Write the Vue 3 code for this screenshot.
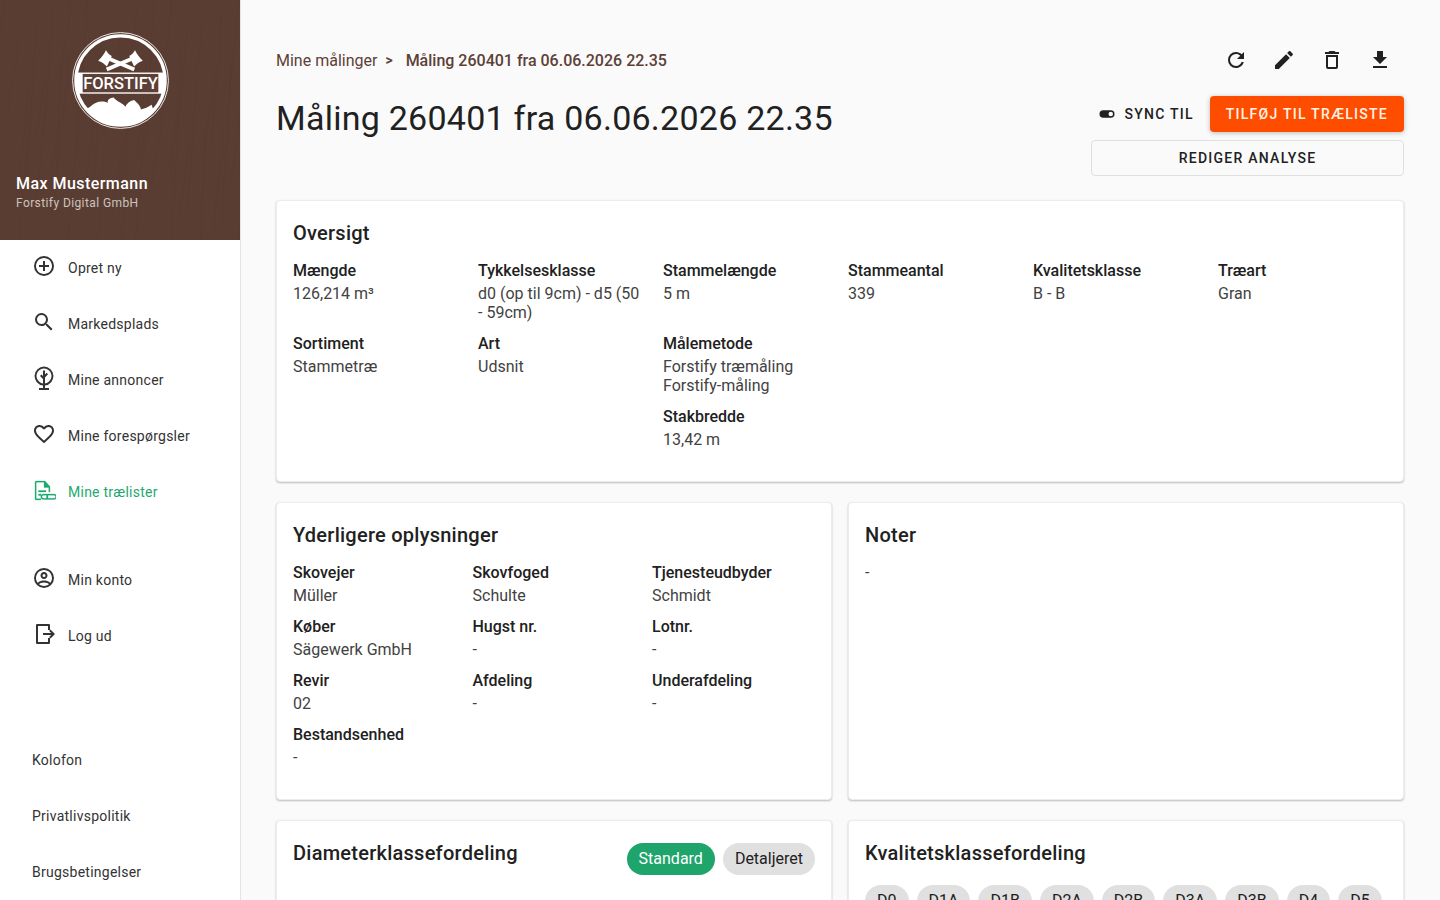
<script setup>
const icons = {
  plus: 'M12,20C7.59,20 4,16.41 4,12C4,7.59 7.59,4 12,4C16.41,4 20,7.59 20,12C20,16.41 16.41,20 12,20M12,2A10,10 0 0,0 2,12A10,10 0 0,0 12,22A10,10 0 0,0 22,12A10,10 0 0,0 12,2M13,7H11V11H7V13H11V17H13V13H17V11H13V7Z',
  search: 'M9.5,3A6.5,6.5 0 0,1 16,9.5C16,11.11 15.41,12.59 14.44,13.73L14.71,14H15.5L20.5,19L19,20.5L14,15.5V14.71L13.73,14.44C12.59,15.41 11.11,16 9.5,16A6.5,6.5 0 0,1 3,9.5A6.5,6.5 0 0,1 9.5,3M9.5,5C7,5 5,7 5,9.5C5,12 7,14 9.5,14C12,14 14,12 14,9.5C14,7 12,5 9.5,5Z',
  heart: 'M12.1,18.55L12,18.65L11.89,18.55C7.14,14.24 4,11.39 4,8.5C4,6.5 5.5,5 7.5,5C9.04,5 10.54,6 11.07,7.36H12.93C13.46,6 14.96,5 16.5,5C18.5,5 20,6.5 20,8.5C20,11.39 16.86,14.24 12.1,18.55M16.5,3C14.76,3 13.09,3.81 12,5.08C10.91,3.81 9.24,3 7.5,3C4.42,3 2,5.41 2,8.5C2,12.27 5.4,15.36 10.55,20.03L12,21.35L13.45,20.03C18.6,15.36 22,12.27 22,8.5C22,5.41 19.58,3 16.5,3Z',
  account: 'M12,2A10,10 0 0,0 2,12A10,10 0 0,0 12,22A10,10 0 0,0 22,12A10,10 0 0,0 12,2M7.07,18.28C7.5,17.38 10.12,16.5 12,16.5C13.88,16.5 16.5,17.38 16.93,18.28C15.57,19.36 13.86,20 12,20C10.14,20 8.43,19.36 7.07,18.28M18.36,16.83C16.93,15.09 13.46,14.5 12,14.5C10.54,14.5 7.07,15.09 5.64,16.83C4.62,15.5 4,13.82 4,12C4,7.59 7.59,4 12,4C16.41,4 20,7.59 20,12C20,13.82 19.38,15.5 18.36,16.83M12,6C10.06,6 8.5,7.56 8.5,9.5C8.5,11.44 10.06,13 12,13C13.94,13 15.5,11.44 15.5,9.5C15.5,7.56 13.94,6 12,6M12,11A1.5,1.5 0 0,1 10.5,9.5A1.5,1.5 0 0,1 12,8A1.5,1.5 0 0,1 13.5,9.5A1.5,1.5 0 0,1 12,11Z',
  logout: 'M5,2H17A1,1 0 0,1 18,3V8H16V4H6V20H16V16H18V21A1,1 0 0,1 17,22H5A1,1 0 0,1 4,21V3A1,1 0 0,1 5,2M18.5,7.5L23,12L18.5,16.5L17.1,15.1L19.2,13H11V11H19.2L17.1,8.9Z',
  tree: 'M12,0.5A9.5,9.5 0 0,0 11,19.44V22H7V24H17V22H13V19.44A9.5,9.5 0 0,0 12,0.5M13,17.4V11.5L16,8.2L14.6,6.8L13,8.5V4.5H11V10L9.4,8.6L8,10L11,13V17.4A7.5,7.5 0 1,1 13,17.4Z',
  list: 'M4,3H13L18,8.5V14H16.8V9.5H12V4.2H4.2V20.8H9V22H4A1,1 0 0,1 3,21V4A1,1 0 0,1 4,3M6.5,12.5H14V14H6.5V12.5M6.5,16H9V17.5H6.5V16M11.5,16H22A2.5,2.5 0 0,1 22,21.5H11.5A2.5,2.5 0 0,1 11.5,16M11.5,17.2A1.5,1.5 0 0,0 11.5,20.3H14.5V17.2H11.5M16,17.2V20.3H22A1.5,1.5 0 0,0 22,17.2H16Z',
  refresh: 'M17.65,6.35C16.2,4.9 14.21,4 12,4A8,8 0 0,0 4,12A8,8 0 0,0 12,20C15.73,20 18.84,17.45 19.73,14H17.65C16.83,16.33 14.61,18 12,18A6,6 0 0,1 6,12A6,6 0 0,1 12,6C13.66,6 15.14,6.69 16.22,7.78L13,11H20V4L17.65,6.35Z',
  pencil: 'M20.71,7.04C21.1,6.65 21.1,6 20.71,5.63L18.37,3.29C18,2.9 17.35,2.9 16.96,3.29L15.12,5.12L18.87,8.87M3,17.25V21H6.75L17.81,9.93L14.06,6.18L3,17.25Z',
  trash: 'M6,19A2,2 0 0,0 8,21H16A2,2 0 0,0 18,19V7H6V19M8,9H16V19H8V9M15.5,4L14.5,3H9.5L8.5,4H5V6H19V4H15.5Z',
  download: 'M5,20H19V18H5M19,9H15V3H9V9H5L12,16L19,9Z',
  toggle: 'M17,7H7A5,5 0 0,0 2,12A5,5 0 0,0 7,17H17A5,5 0 0,0 22,12A5,5 0 0,0 17,7M17,15A3,3 0 0,1 14,12A3,3 0 0,1 17,9A3,3 0 0,1 20,12A3,3 0 0,1 17,15Z',
}
const nav = [
  { label: 'Opret ny', icon: 'plus' },
  { label: 'Markedsplads', icon: 'search' },
  { label: 'Mine annoncer', icon: 'tree' },
  { label: 'Mine forespørgsler', icon: 'heart' },
  { label: 'Mine trælister', icon: 'list', active: true },
]
const nav2 = [
  { label: 'Min konto', icon: 'account' },
  { label: 'Log ud', icon: 'logout' },
]
const footer = ['Kolofon', 'Privatlivspolitik', 'Brugsbetingelser']
const actions = ['refresh', 'pencil', 'trash', 'download']
const overview = [
  [{ l: 'Mængde', v: ['126,214 m³'] }],
  [{ l: 'Tykkelsesklasse', v: ['d0 (op til 9cm) - d5 (50 - 59cm)'] }],
  [{ l: 'Stammelængde', v: ['5 m'] }],
  [{ l: 'Stammeantal', v: ['339'] }],
  [{ l: 'Kvalitetsklasse', v: ['B - B'] }],
  [{ l: 'Træart', v: ['Gran'] }],
  [{ l: 'Sortiment', v: ['Stammetræ'] }],
  [{ l: 'Art', v: ['Udsnit'] }],
  [{ l: 'Målemetode', v: ['Forstify træmåling', 'Forstify-måling'] }, { l: 'Stakbredde', v: ['13,42 m'] }],
]
const extra = [
  { l: 'Skovejer', v: 'Müller' }, { l: 'Skovfoged', v: 'Schulte' }, { l: 'Tjenesteudbyder', v: 'Schmidt' },
  { l: 'Køber', v: 'Sägewerk GmbH' }, { l: 'Hugst nr.', v: '-' }, { l: 'Lotnr.', v: '-' },
  { l: 'Revir', v: '02' }, { l: 'Afdeling', v: '-' }, { l: 'Underafdeling', v: '-' },
  { l: 'Bestandsenhed', v: '-' },
]
const chips = ['D0', 'D1A', 'D1B', 'D2A', 'D2B', 'D3A', 'D3B', 'D4', 'D5']
const grain = Array.from({ length: 46 }, (_, i) => {
  const x = 4 + i * 5.4 + ((i * 37) % 11) - 5
  const y = ((i * 53) % 170) - 20
  const len = 50 + ((i * 29) % 130)
  const bend = ((i * 17) % 9) - 4
  return `M${x + 10} ${y}C${x + 8 + bend} ${y + len / 3} ${x + 4 - bend} ${y + (2 * len) / 3} ${x} ${y + len}`
})
</script>

<template>
  <div class="app">
    <aside class="sidebar">
      <header class="brand">
        <svg class="grain" viewBox="0 0 240 240" aria-hidden="true">
          <path v-for="(d, i) in grain" :key="i" :d="d" />
        </svg>
        <svg class="logo" viewBox="0 0 100 100" aria-hidden="true">
          <defs>
            <clipPath id="inner"><circle cx="50" cy="50" r="46" /></clipPath>
          </defs>
          <circle cx="50" cy="50" r="49.4" fill="none" stroke="#fff" stroke-width="0.9" />
          <circle cx="50" cy="50" r="46" fill="none" stroke="#fff" stroke-width="3.4" />
          <g clip-path="url(#inner)" fill="#fff">
            <rect x="0" y="41.8" width="100" height="21.8" />
            <path d="M20 76C24 72 31 70 37 73C36 70.5 38 68 43 67.5C45 71 52 73 55 77C56 74 59 71 64 70C67 73 71 76 71 80C74 79 78 78 82 75L92 102H8V80C13 80 17 79 20 76Z" />
          </g>
          <g fill="#fff">
            <path d="M36 24.5L65 36.8L63.4 40.4L34.4 28.1Z" />
            <path d="M64 24.5L35 36.8L36.6 40.4L65.6 28.1Z" />
            <path d="M27 29.6C30 27 33 23 35 18.8C36.5 21.5 38.6 23.6 41 24.8L36 35.5C33.5 32.8 30.5 30.8 27 29.6Z" />
            <path d="M73 29.6C70 27 67 23 65 18.8C63.5 21.5 61.4 23.6 59 24.8L64 35.5C66.5 32.8 69.5 30.8 73 29.6Z" />
          </g>
          <rect x="11" y="43.2" width="78" height="19" fill="#5d4037" />
          <text x="50" y="59.2" text-anchor="middle" class="logo-text">FORSTIFY</text>
        </svg>
        <div class="user">
          <div class="user-name">Max Mustermann</div>
          <div class="user-org">Forstify Digital GmbH</div>
        </div>
      </header>

      <nav class="nav">
        <a v-for="n in nav" :key="n.label" class="nav-item" :class="{ active: n.active }">
          <svg class="icon nav-icon" viewBox="0 0 24 24"><path :d="icons[n.icon]" /></svg>
          <span>{{ n.label }}</span>
        </a>
      </nav>
      <nav class="nav nav-second">
        <a v-for="n in nav2" :key="n.label" class="nav-item">
          <svg class="icon nav-icon" viewBox="0 0 24 24"><path :d="icons[n.icon]" /></svg>
          <span>{{ n.label }}</span>
        </a>
      </nav>
      <nav class="nav nav-footer">
        <a v-for="f in footer" :key="f" class="nav-item"><span>{{ f }}</span></a>
      </nav>
    </aside>

    <main class="main">
      <div class="crumb-row">
        <div class="crumbs">
          <span>Mine målinger</span>
          <span class="crumb-sep">&gt;</span>
          <span class="crumb-current">Måling 260401 fra 06.06.2026 22.35</span>
        </div>
        <div class="actions">
          <button v-for="a in actions" :key="a" class="icon-btn">
            <svg class="icon" viewBox="0 0 24 24"><path :d="icons[a]" /></svg>
          </button>
        </div>
      </div>

      <div class="title-row">
        <h1 class="title">Måling 260401 fra 06.06.2026 22.35</h1>
        <div class="title-btns">
          <div class="btn-line">
            <button class="btn btn-text">
              <svg class="icon toggle" viewBox="0 0 24 24"><path :d="icons.toggle" /></svg>
              SYNC TIL
            </button>
            <button class="btn btn-primary">TILFØJ TIL TRÆLISTE</button>
          </div>
          <button class="btn btn-outline">REDIGER ANALYSE</button>
        </div>
      </div>

      <section class="card">
        <h2 class="card-title">Oversigt</h2>
        <div class="grid-six">
          <div v-for="(col, i) in overview" :key="i" class="stack">
            <div v-for="f in col" :key="f.l" class="field">
              <div class="label">{{ f.l }}</div>
              <div v-for="v in f.v" :key="v" class="value">{{ v }}</div>
            </div>
          </div>
        </div>
      </section>

      <div class="two">
        <section class="card">
          <h2 class="card-title">Yderligere oplysninger</h2>
          <div class="grid-three">
            <div v-for="f in extra" :key="f.l" class="field">
              <div class="label">{{ f.l }}</div>
              <div class="value">{{ f.v }}</div>
            </div>
          </div>
        </section>
        <section class="card">
          <h2 class="card-title">Noter</h2>
          <div class="value">-</div>
        </section>
      </div>

      <div class="two">
        <section class="card card-tall">
          <div class="card-head">
            <h2 class="card-title">Diameterklassefordeling</h2>
            <div class="pills">
              <span class="chip chip-on">Standard</span>
              <span class="chip">Detaljeret</span>
            </div>
          </div>
        </section>
        <section class="card card-tall">
          <h2 class="card-title">Kvalitetsklassefordeling</h2>
          <div class="chip-row">
            <span v-for="c in chips" :key="c" class="chip">{{ c }}</span>
          </div>
        </section>
      </div>
    </main>
  </div>
</template>

<style>
html, body { margin: 0; background: #fafafa; overflow: hidden; }
</style>

<style scoped>
.app {
  display: flex;
  height: 100vh;
  overflow: hidden;
  background: #fafafa;
  color: #212121;
  font-family: Roboto, "Liberation Sans", sans-serif;
}
.sidebar {
  flex: 0 0 241px;
  box-sizing: border-box;
  display: flex;
  flex-direction: column;
  background: #fff;
  border-right: 1px solid #e4e4e4;
  overflow: hidden;
}
.brand {
  position: relative;
  height: 240px;
  flex: none;
  background: #5a3d32;
  display: flex;
  flex-direction: column;
  color: #fff;
  overflow: hidden;
}
.grain {
  position: absolute;
  inset: 0;
  width: 240px;
  height: 240px;
}
.grain path {
  fill: none;
  stroke: rgba(35, 18, 10, 0.08);
  stroke-width: 0.7;
}
.logo {
  position: relative;
  width: 97px;
  height: 97px;
  margin: 31.5px auto 0;
  flex: none;
}
.logo-text {
  font-family: Roboto, sans-serif;
  font-size: 17px;
  font-weight: 500;
  fill: #fff;
}
.user {
  position: relative;
  margin: 45px 0 0 16px;
}
.user-name {
  font-size: 16px;
  font-weight: 500;
  line-height: 20px;
  letter-spacing: 0.45px;
}
.user-org {
  margin-top: 0;
  font-size: 12px;
  line-height: 18px;
  letter-spacing: 0.4px;
  color: rgba(255, 255, 255, 0.7);
}
.nav { display: flex; flex-direction: column; }
.nav-second { margin-top: 32px; }
.nav-footer { margin-top: 68px; }
.nav-item {
  height: 56px;
  display: flex;
  align-items: center;
  gap: 12px;
  padding-left: 32px;
  font-size: 14px;
  letter-spacing: 0.25px;
  color: #333;
}
.nav-item.active { color: #1fa971; }
.nav-item.active path { stroke: currentColor; stroke-width: 0.3; }
.nav-icon { margin-top: -4px; }
.icon {
  width: 24px;
  height: 24px;
  flex: none;
  fill: currentColor;
}
.main {
  flex: 1;
  min-width: 0;
  padding: 42px 36px 0 35px;
}
.crumb-row {
  display: flex;
  justify-content: space-between;
  align-items: center;
  height: 36px;
}
.crumbs {
  display: flex;
  align-items: center;
  font-size: 16px;
  color: #5d4037;
}
.crumb-sep { margin: 0 13px 0 8px; font-size: 14px; font-weight: 700; }
.crumb-current { font-weight: 500; }
.actions { display: flex; gap: 12px; margin-right: 6px; }
.icon-btn {
  width: 36px;
  height: 36px;
  padding: 0;
  border: 0;
  background: none;
  color: #212121;
  display: flex;
  align-items: center;
  justify-content: center;
}
.title-row {
  display: flex;
  justify-content: space-between;
  align-items: flex-start;
  margin-top: 18px;
}
.title {
  margin: 2px 0 0;
  font-size: 34px;
  font-weight: 400;
  line-height: 40px;
  letter-spacing: 0.25px;
  color: #212121;
}
.title-btns {
  width: 313px;
  flex: none;
  display: flex;
  flex-direction: column;
  gap: 8px;
}
.btn-line { display: flex; justify-content: flex-end; }
.btn {
  height: 36px;
  padding: 0 16px;
  border: 0;
  border-radius: 4px;
  font-family: inherit;
  font-size: 14px;
  font-weight: 500;
  letter-spacing: 1.25px;
  white-space: nowrap;
  flex: none;
  display: flex;
  align-items: center;
  justify-content: center;
  box-sizing: border-box;
  background: none;
  color: #212121;
}
.toggle { width: 18px; height: 18px; margin-right: 8px; }
.btn-primary {
  background: #ff4d00;
  color: #fff3e6;
  box-shadow: 0 1px 5px rgba(0, 0, 0, 0.25);
}
.btn-outline {
  width: 100%;
  border: 1px solid #e0e0e0;
}
.card {
  background: #fff;
  border: 1px solid #ececec;
  border-radius: 4px;
  padding: 16px 16px 32px;
  box-sizing: border-box;
  box-shadow: 0 1px 2px rgba(0, 0, 0, 0.25);
  margin-top: 24px;
}
.card-title {
  margin: 0 0 12px;
  font-size: 20px;
  font-weight: 500;
  line-height: 32px;
  letter-spacing: 0.25px;
  color: #212121;
}
.grid-six {
  display: grid;
  grid-template-columns: repeat(6, 185px);
  row-gap: 12px;
}
.stack { display: flex; flex-direction: column; gap: 12px; }
.field { padding-right: 16px; }
.label {
  font-size: 16px;
  font-weight: 500;
  line-height: 19px;
  margin-bottom: 4px;
  color: #212121;
}
.value {
  font-size: 16px;
  line-height: 19px;
  color: #424242;
}
.two {
  display: grid;
  grid-template-columns: repeat(2, minmax(0, 1fr));
  gap: 16px;
  margin-top: 20px;
}
.two .card { margin-top: 0; }
.grid-three {
  display: grid;
  grid-template-columns: repeat(3, 179.5px);
  row-gap: 12px;
}
.card-tall { height: 200px; }
.card-head {
  display: flex;
  justify-content: space-between;
  align-items: flex-start;
}
.pills { display: flex; gap: 8px; margin-top: 6px; }
.chip {
  height: 32px;
  padding: 0 12px;
  border-radius: 16px;
  background: #e0e0e0;
  color: #212121;
  font-size: 16px;
  line-height: 32px;
  box-sizing: border-box;
  white-space: nowrap;
}
.chip-on { background: #1fa56c; color: #fff; }
.chip-row { display: flex; gap: 8px; margin-top: 16px; }
</style>
